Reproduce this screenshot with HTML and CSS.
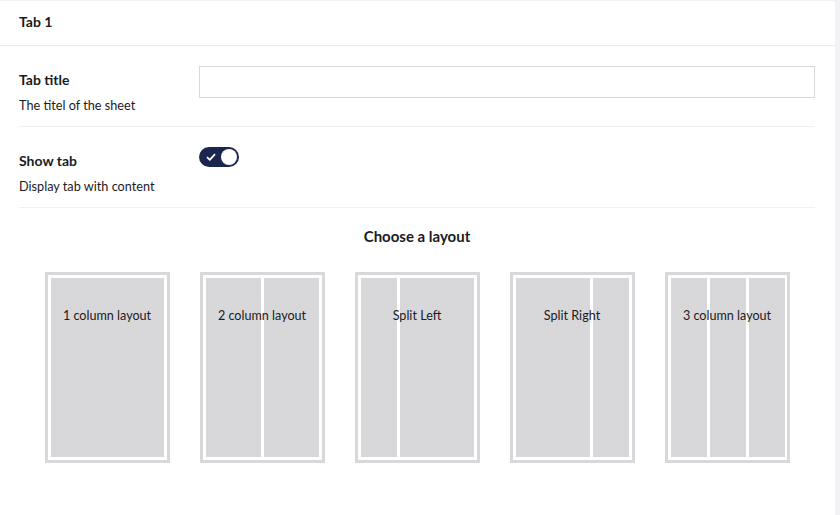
FILE: index.html
```html
<!DOCTYPE html>
<html>
<head>
<meta charset="utf-8">
<link rel="stylesheet" href="styles.css">
</head>
<body>
<div class="panel">
  <div class="panel-header">Tab 1</div>
  <div class="panel-body">
    <div class="prop">
      <div class="prop-label">
        <div class="label">Tab title</div>
        <div class="desc">The titel of the sheet</div>
      </div>
      <div class="prop-editor">
        <input class="text-input" type="text">
      </div>
    </div>
    <div class="prop">
      <div class="prop-label">
        <div class="label">Show tab</div>
        <div class="desc">Display tab with content</div>
      </div>
      <div class="prop-editor">
        <div class="toggle">
          <svg class="toggle-check" width="10" height="8" viewBox="0 0 10 8"><path d="M1 4.2 L3.8 6.8 L9 1.2" fill="none" stroke="#fff" stroke-width="1.8"/></svg>
          <span class="toggle-knob"></span>
        </div>
      </div>
    </div>
    <div class="layouts">
      <h3 class="layouts-title">Choose a layout</h3>
      <div class="layout-list">
        <div class="layout">
          <div class="layout-inner">
            <div class="col c-full"></div>
          </div>
          <span class="layout-name">1 column layout</span>
        </div>
        <div class="layout">
          <div class="layout-inner">
            <div class="col c-half"></div>
            <div class="col c-half"></div>
          </div>
          <span class="layout-name">2 column layout</span>
        </div>
        <div class="layout">
          <div class="layout-inner">
            <div class="col c-third"></div>
            <div class="col c-two"></div>
          </div>
          <span class="layout-name">Split Left</span>
        </div>
        <div class="layout">
          <div class="layout-inner">
            <div class="col c-two"></div>
            <div class="col c-third"></div>
          </div>
          <span class="layout-name">Split Right</span>
        </div>
        <div class="layout">
          <div class="layout-inner">
            <div class="col c-third"></div>
            <div class="col c-third"></div>
            <div class="col c-third"></div>
          </div>
          <span class="layout-name">3 column layout</span>
        </div>
      </div>
    </div>
  </div>
</div>
</body>
</html>
```

FILE: styles.css
```css
* { box-sizing: border-box; }
html, body {
  margin: 0;
  background: #f3f3f5;
  height: 100%;
}
body {
  padding: 1px 5px 0 0;
  font-family: Lato, "Open Sans", sans-serif;
  color: #1b1b1f;
  font-size: 13px;
}
.panel {
  background: #fff;
  border-radius: 0 3px 0 0;
  height: 514px;
}
.panel-header {
  height: 45px;
  border-bottom: 1px solid #e9e9eb;
  padding: 11px 19px 0;
  font-weight: 700;
  font-size: 14px;
  line-height: 20px;
}
.panel-body {
  padding: 0 20px 0 19px;
}
.prop {
  display: flex;
  padding: 20px 0 11px;
  border-bottom: 1px solid #f0f0f2;
}
.prop-label {
  width: 180px;
  flex: none;
}
.label {
  padding-top: 4px;
  font-weight: 700;
  font-size: 14px;
  line-height: 20px;
}
.desc {
  margin-top: 5px;
  font-size: 12.7px;
  line-height: 20px;
}
.prop-editor {
  flex: 1;
}
.text-input {
  display: block;
  width: 100%;
  height: 32px;
  border: 1px solid #d8d7d9;
  margin: 0;
  padding: 0 8px;
  font: inherit;
}
.toggle {
  width: 40px;
  height: 20px;
  border-radius: 10px;
  background: #1b264f;
  display: flex;
  align-items: center;
  justify-content: space-between;
  padding: 0 2px 0 7px;
}
.toggle-check { display: block; }
.toggle-knob {
  width: 16px;
  height: 16px;
  border-radius: 50%;
  background: #fff;
}
.layouts {
  padding-top: 18px;
}
.layouts-title {
  margin: 0;
  text-align: center;
  font-size: 15px;
  font-weight: 700;
  line-height: 20px;
}
.layout-list {
  display: flex;
  justify-content: center;
  gap: 30px;
  margin-top: 26px;
}
.layout {
  position: relative;
  width: 125px;
  height: 191px;
  border: 3px solid #d8d8da;
  padding: 3px;
}
.layout-inner {
  display: flex;
  gap: 3px;
  height: 100%;
}
.col {
  background: #d8d8da;
  height: 100%;
}
.c-full { flex: 1; }
.c-half { flex: 1; }
.c-third { width: 36px; flex: none; }
.c-two { flex: 1; }
.layout-name {
  position: absolute;
  left: 0;
  right: 0;
  top: 32px;
  text-align: center;
  font-size: 12.6px;
  line-height: 18px;
  color: #1b1b1f;
}
```
